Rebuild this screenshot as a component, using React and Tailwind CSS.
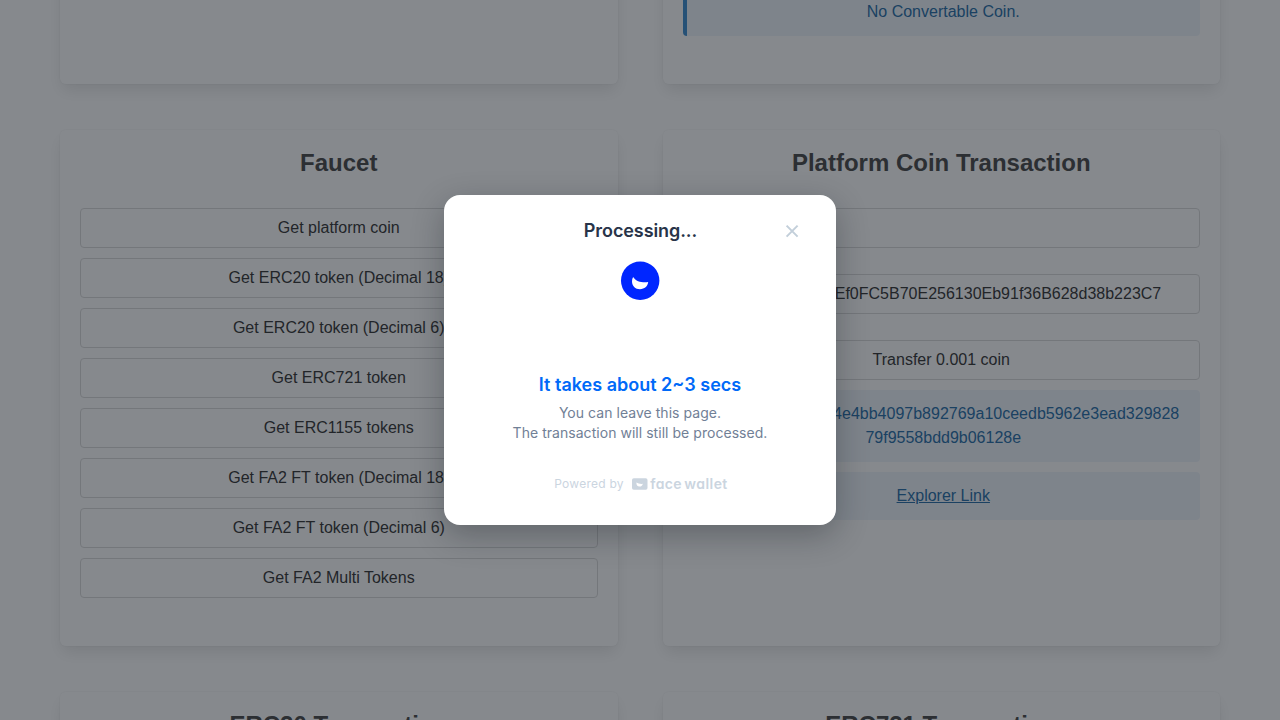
import React from "react";

const faucets = [
  "Get platform coin",
  "Get ERC20 token (Decimal 18)",
  "Get ERC20 token (Decimal 6)",
  "Get ERC721 token",
  "Get ERC1155 tokens",
  "Get FA2 FT token (Decimal 18)",
  "Get FA2 FT token (Decimal 6)",
  "Get FA2 Multi Tokens",
];

function Card({ title, className = "", children }) {
  return (
    <section
      className={`w-[557.5px] rounded-[6px] bg-white px-5 pt-[19px] pb-5 shadow-[0_8px_16px_-2px_rgba(10,10,10,0.1),0_0_0_1px_rgba(10,10,10,0.02)] ${className}`}
    >
      {title && (
        <h2 className="mb-8 text-center text-[24px] leading-[27px] font-bold text-[#4a4a4a]">{title}</h2>
      )}
      {children}
    </section>
  );
}

function Field({ children, className = "" }) {
  return (
    <div
      className={`flex h-10 items-center justify-center rounded-[4px] border border-[#dbdbdb] bg-white pb-px text-[#363636] ${className}`}
    >
      {children}
    </div>
  );
}

function Notice({ children, className = "" }) {
  return (
    <div
      className={`rounded-[4px] border-l-4 border-[#3e8ed0] bg-[#eff5fb] p-3 text-center text-[#296fa8] ${className}`}
    >
      {children}
    </div>
  );
}

function Page() {
  return (
    <main className="flex h-[720px] flex-col gap-[46px] overflow-hidden bg-white px-[60px] font-['Liberation_Sans',sans-serif] text-[16px] leading-6">
      <div className="flex h-[84px] shrink-0 items-end justify-between">
        <Card className="h-[200px] shrink-0" />
        <Card className="flex h-[200px] shrink-0 flex-col justify-end pb-12">
          <Notice>No Convertable Coin.</Notice>
        </Card>
      </div>

      <div className="flex h-[516px] shrink-0 justify-between">
        <Card title="Faucet">
          <div className="flex flex-col gap-[10px]">
            {faucets.map((name) => (
              <Field key={name}>{name}</Field>
            ))}
          </div>
        </Card>
        <Card title="Platform Coin Transaction">
          <Field />
          <Field className="mt-[26px]">
            <span className="w-[440px] text-right whitespace-nowrap">Ef0FC5B70E256130Eb91f36B628d38b223C7</span>
          </Field>
          <Field className="mt-[26px]">Transfer 0.001 coin</Field>
          <Notice className="mt-[10px]">
            <div className="mx-auto w-[472px] text-right">4e4bb4097b892769a10ceedb5962e3ead329828</div>
            <div>79f9558bdd9b06128e</div>
          </Notice>
          <Notice className="mt-[10px]">
            <span className="underline">Explorer Link</span>
          </Notice>
        </Card>
      </div>

      <div className="flex h-[200px] shrink-0 justify-between">
        <Card title="ERC20 Transaction" />
        <Card title="ERC721 Transaction" />
      </div>
    </main>
  );
}

function Modal() {
  return (
    <div className="flex h-[330px] w-[392px] flex-col items-center rounded-[16px] bg-white font-['Inter',sans-serif] shadow-[0_10px_32px_rgba(13,20,28,0.3)]">
      <header className="mt-6 grid h-6 w-full grid-cols-[1fr_auto_1fr] items-center px-8">
        <span />
        <h1 className="pl-px text-[18px] leading-6 font-semibold tracking-[-0.08px] text-[#283449]">Processing...</h1>
        <svg className="h-6 w-6 justify-self-end" viewBox="0 0 24 24" fill="none" stroke="#c3cfda" strokeWidth="2">
          <path d="M6.6 6.6 17.6 17.6M17.6 6.6 6.6 17.6" />
        </svg>
      </header>
      <svg className="mt-[18px] h-10 w-10" viewBox="0 0 40 40">
        <circle cx="20.2" cy="19.7" r="19.2" fill="#0026ff" />
        <path d="M13.1 15.9C16.2 20.6 22 21.9 28.2 21.1C27.7 25.4 24.4 28.2 20 28.2C15.2 28.2 12 24.8 12 20.2C12 18.5 12.4 17.1 13.1 15.9Z" fill="#fff" />
      </svg>
      <p className="mt-[72px] text-[18px] leading-6 font-semibold text-[#0069f8]">It takes about 2~3 secs</p>
      <p className="mt-[6px] text-center text-[14px] leading-5 tracking-[0.04px] text-[#718096]">
        You can leave this page.
        <br />
        The transaction will still be processed.
      </p>
      <footer className="mt-[33px] flex h-4 items-center gap-2 pl-[2px]">
        <span className="text-[12px] leading-4 tracking-[0.25px] text-[#cbd5df]">Powered by</span>
        <svg className="h-4 w-24" viewBox="0 0 96 16" fill="#cbd5df">
          <rect x="0" y="2.3" width="15.5" height="11.5" rx="1.8" />
          <path d="M4.4 6.5Q7 8.2 10.8 7.8Q10.3 10.6 7.6 10.6Q4.2 10.4 4.4 6.5Z" fill="#fff" />
          <text
            y="13.3"
            fontSize="14"
            fontWeight="600"
            className="[font-feature-settings:'cv11']"
          >
            <tspan x="18.3" textLength="31.2" lengthAdjust="spacing">face</tspan>
            <tspan x="52.3" textLength="43" lengthAdjust="spacing">wallet</tspan>
          </text>
        </svg>
      </footer>
    </div>
  );
}

export default function App() {
  return (
    <div className="relative h-[720px] w-[1280px] overflow-hidden">
      <Page />
      <div className="absolute inset-0 flex items-center justify-center bg-[rgba(13,20,28,0.5)]">
        <Modal />
      </div>
    </div>
  );
}
